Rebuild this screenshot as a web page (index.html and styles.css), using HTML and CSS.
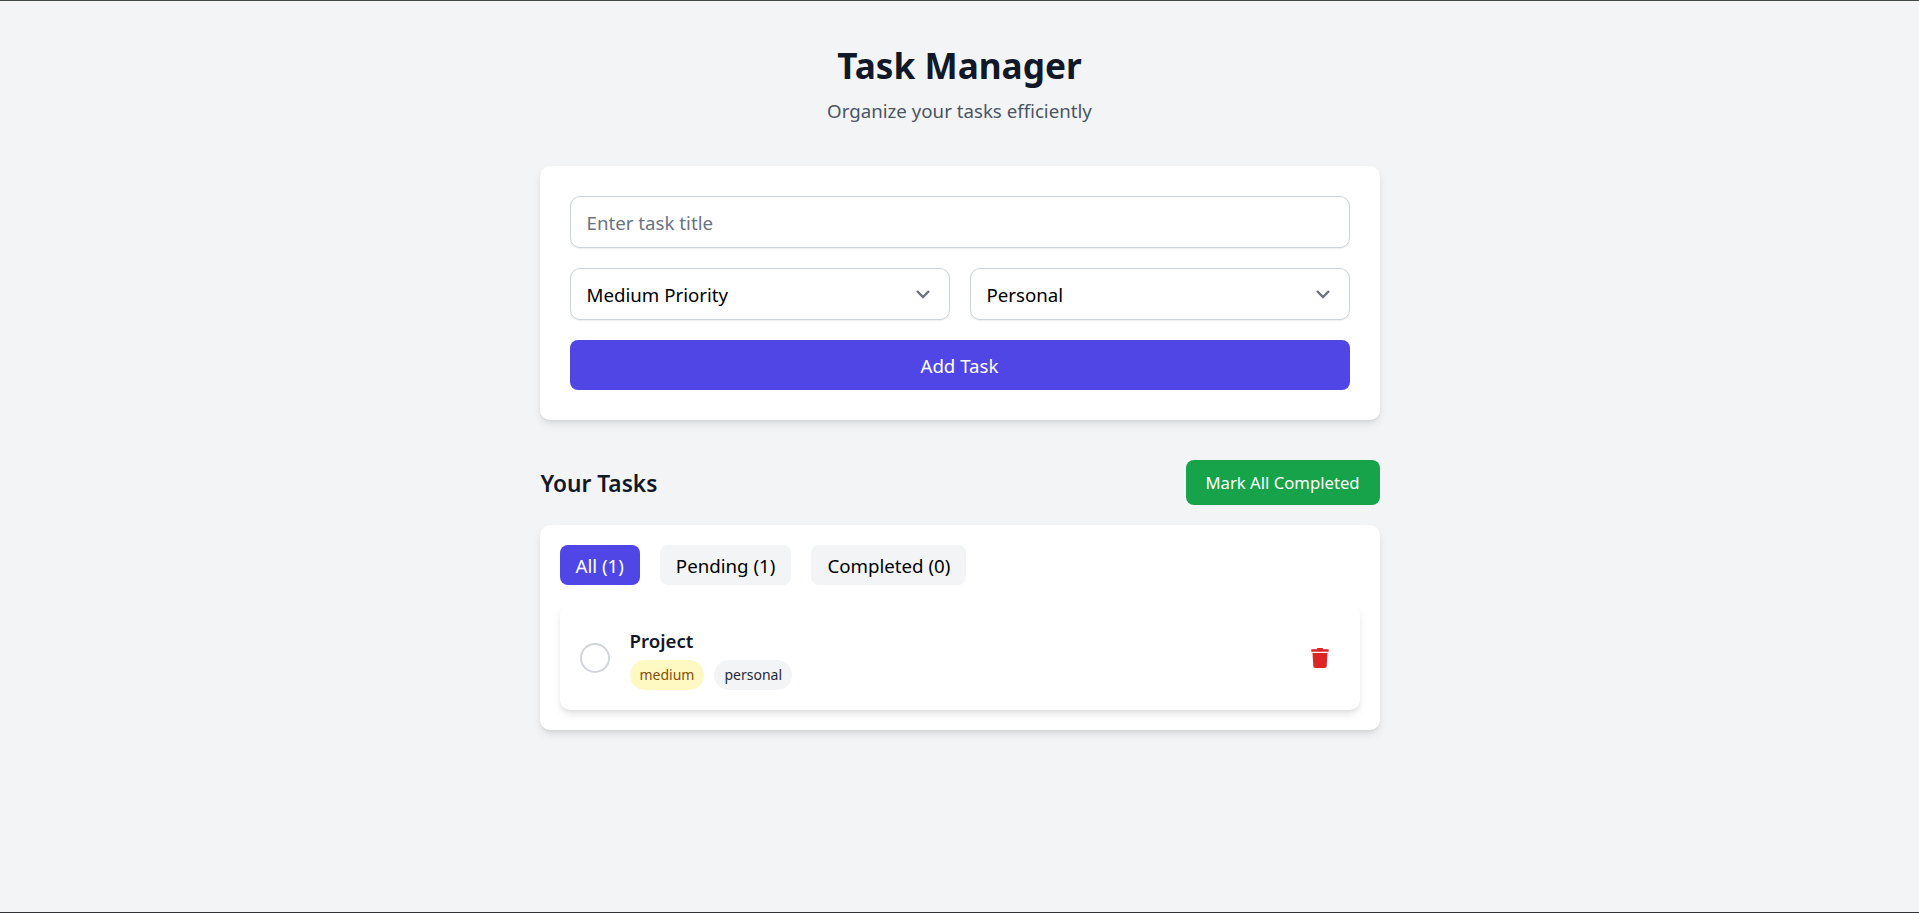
FILE: index.html
```html
<!DOCTYPE html>
<html lang="en">
<head>
<meta charset="utf-8">
<title>Task Manager</title>
<link rel="stylesheet" href="styles.css">
</head>
<body>
<main class="page">
  <header class="head">
    <h1 class="title">Task Manager</h1>
    <p class="subtitle">Organize your tasks efficiently</p>
  </header>
  <section class="card form">
    <input class="field" type="text" placeholder="Enter task title">
    <div class="selects">
      <div class="select"><span>Medium Priority</span>
        <svg class="chev" viewBox="0 0 20 20" fill="none" stroke="currentColor" stroke-width="2.4"><path d="M4 7l6 6 6-6"/></svg>
      </div>
      <div class="select"><span>Personal</span>
        <svg class="chev" viewBox="0 0 20 20" fill="none" stroke="currentColor" stroke-width="2.4"><path d="M4 7l6 6 6-6"/></svg>
      </div>
    </div>
    <button class="add">Add Task</button>
  </section>
  <div class="tasks-head">
    <h2 class="tasks-title">Your Tasks</h2>
    <button class="mark">Mark All Completed</button>
  </div>
  <section class="card list">
    <div class="tabs">
      <button class="tab active">All (1)</button>
      <button class="tab">Pending (1)</button>
      <button class="tab">Completed (0)</button>
    </div>
    <article class="task">
      <span class="check"></span>
      <div class="body">
        <div class="name">Project</div>
        <div class="badges">
          <span class="badge medium">medium</span>
          <span class="badge personal">personal</span>
        </div>
      </div>
      <svg class="trash" viewBox="0 0 448 512" fill="currentColor"><path d="M432 32H312l-9.400-18.700A24 24 0 0 0 281.100 0H166.800a23.720 23.720 0 0 0-21.400 13.300L136 32H16A16 16 0 0 0 0 48v32a16 16 0 0 0 16 16h416a16 16 0 0 0 16-16V48a16 16 0 0 0-16-16zM53.200 467a48 48 0 0 0 47.900 45h245.800a48 48 0 0 0 47.900-45L416 128H32z"/></svg>
    </article>
  </section>
</main>
</body>
</html>
```
FILE: styles.css
```css
* { box-sizing: border-box; }
html, body { margin: 0; height: 100%; }
body {
  background: #f3f4f6;
  border-top: 1px solid #3f4a44;
  border-bottom: 1px solid #2f3338;
  font-family: "Noto Sans", "Open Sans", sans-serif;
  color: #111827;
  overflow: hidden;
}
.page { width: 840px; margin: 0 auto; padding-top: 39px; }
.head { text-align: center; height: 126px; }
.title { margin: 0; font-size: 35.200px; line-height: 50px; font-weight: 700; color: #111827; }
.subtitle { margin: 0; padding-top: 6px; font-size: 18.700px; line-height: 30px; color: #4b5563; }
.card { background: #fff; border-radius: 10px; box-shadow: 0 5px 8px -1px rgba(0,0,0,.1), 0 2px 4px -2px rgba(0,0,0,.1); }
.form { padding: 30px; display: flex; flex-direction: column; gap: 20px; }
.field, .select {
  height: 52px; width: 100%;
  border: 1px solid #cfd3da; border-radius: 10px;
  box-shadow: 0 1px 2px rgba(0,0,0,.08);
  background: #fff; padding: 0 16px;
  font: inherit; font-size: 18.700px; color: #000;
}
.field::placeholder { color: #6b7280; opacity: 1; }
.field { outline: none; }
.selects { display: grid; grid-template-columns: 1fr 1fr; gap: 20px; }
.select { display: flex; align-items: center; justify-content: space-between; padding-right: 16px; }
.chev { width: 20px; height: 20px; color: #6b7280; }
.add { height: 50px; border: 0; border-radius: 8px; background: #4f46e5; color: #fff; font: inherit; font-size: 18.700px; }
.tasks-head { display: flex; align-items: center; justify-content: space-between; margin: 40px 0 20px; height: 45px; }
.tasks-title { margin: 2px 0 0 1px; font-size: 22.700px; font-weight: 600; color: #111827; }
.mark { width: 194px; height: 45px; border: 0; border-radius: 8px; background: #16a34a; color: #fff; font: inherit; font-size: 16.700px; }
.list { padding: 20px; }
.tabs { display: flex; gap: 20px; margin-bottom: 20px; }
.tab { height: 40px; padding: 0 16px; border: 0; border-radius: 8px; background: #f3f4f6; color: #000; font: inherit; font-size: 18.700px; }
.tab.active { background: #4f46e5; color: #fff; }
.task { display: flex; align-items: center; height: 105px; padding: 0 20px; border-radius: 10px; background: #fff; box-shadow: 0 5px 8px -1px rgba(0,0,0,.1), 0 2px 4px -2px rgba(0,0,0,.1); }
.check { width: 30px; height: 30px; border: 2px solid #d1d5db; border-radius: 50%; flex: none; margin-right: 20px; }
.body { flex: 1; }
.name { font-size: 18.700px; font-weight: 600; line-height: 26px; color: #111827; margin-top: 2px; margin-bottom: 6px; }
.badges { display: flex; gap: 10px; }
.badge { height: 30px; line-height: 30px; padding: 0 10px; border-radius: 15px; font-size: 14px; }
.medium { background: #fef9c3; color: #854d0e; }
.personal { background: #f3f4f6; color: #1f2937; }
.trash { width: 18px; height: 20px; color: #dc2626; margin-right: 11px; }
```
